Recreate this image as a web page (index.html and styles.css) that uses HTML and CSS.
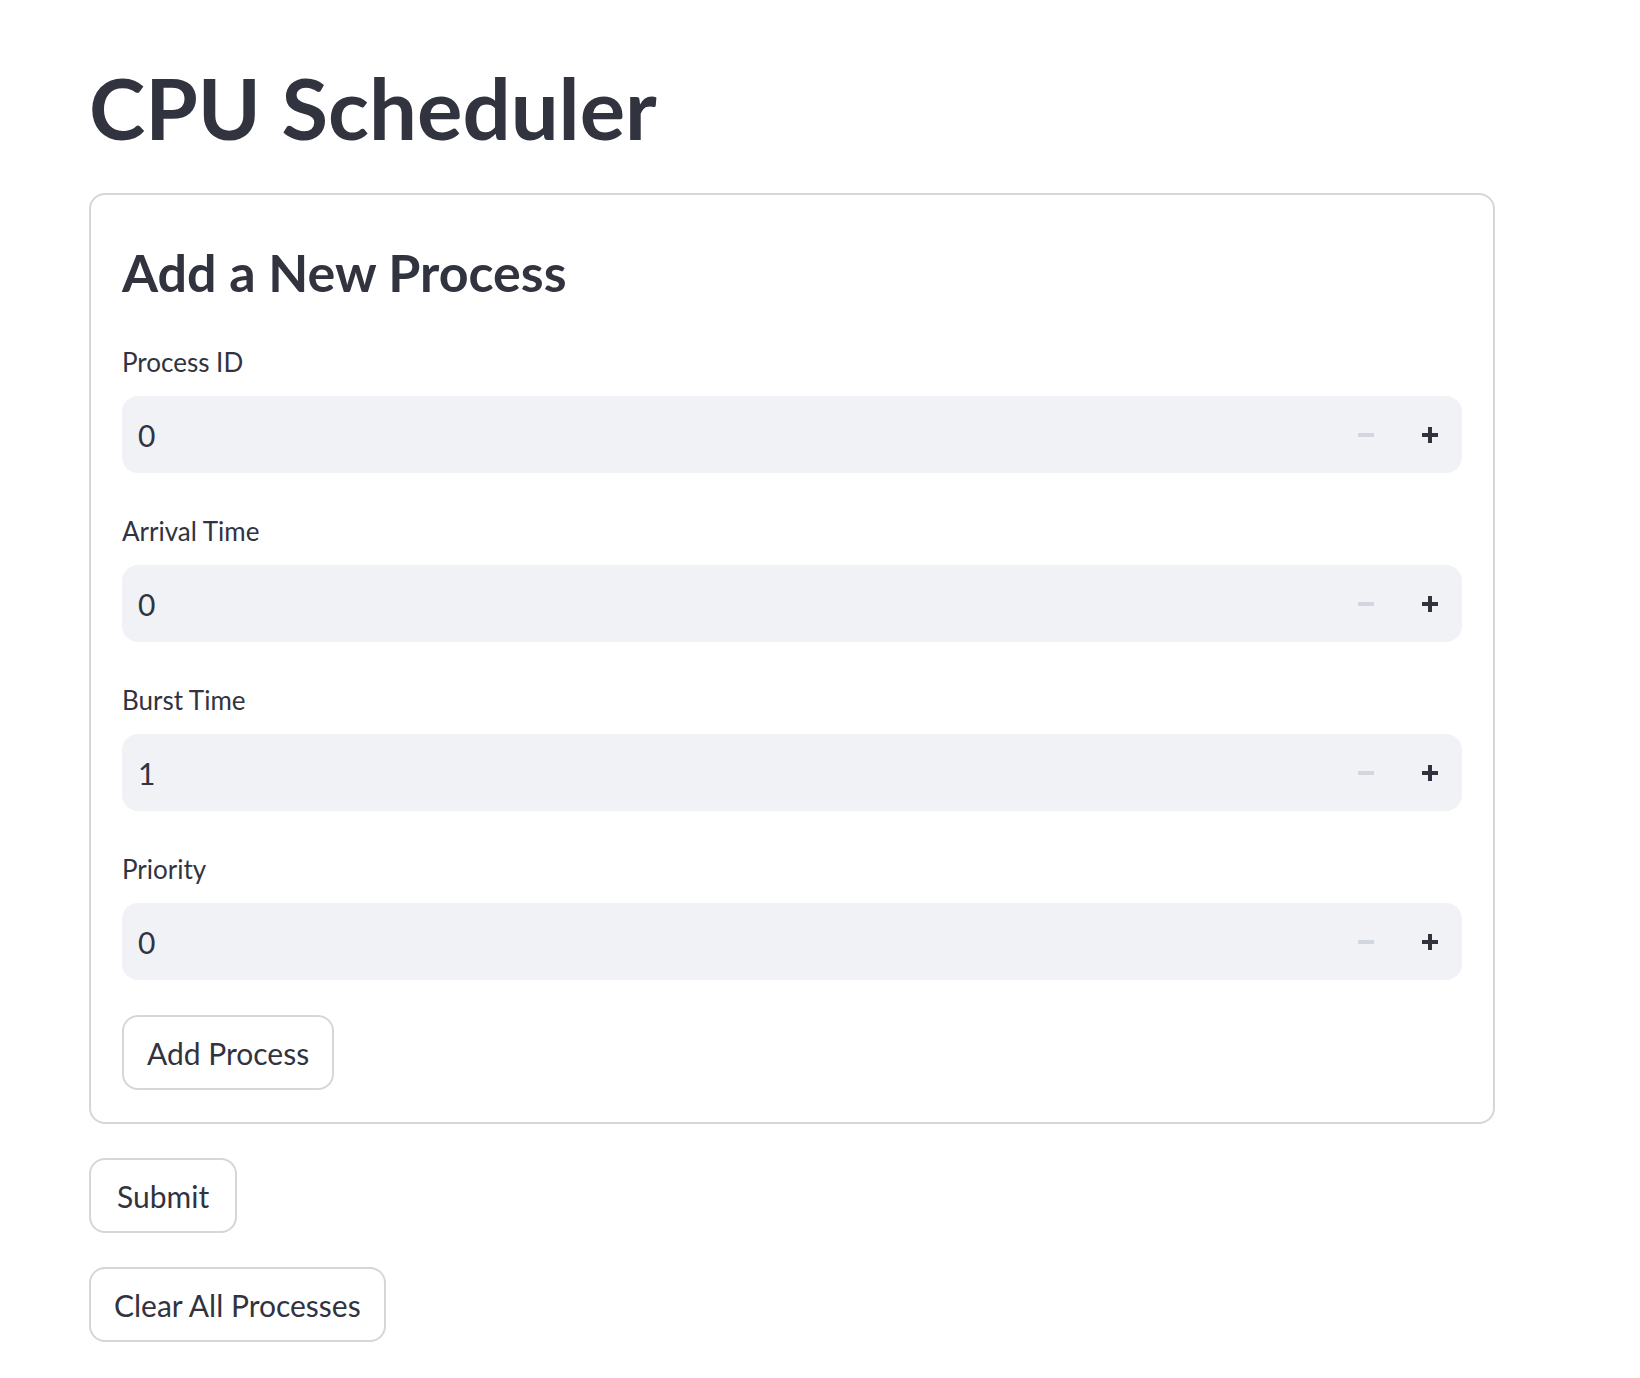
FILE: index.html
```html
<!DOCTYPE html>
<html lang="en">
<head>
<meta charset="utf-8">
<title>CPU Scheduler</title>
<link rel="stylesheet" href="styles.css">
</head>
<body>
<main class="page">
  <h1 class="title">CPU Scheduler</h1>
  <form class="form-box">
    <h3 class="form-title">Add a New Process</h3>

    <div class="field">
      <label class="field-label">Process ID</label>
      <div class="num-input">
        <span class="num-value">0</span>
        <div class="steps">
          <span class="step step-off"><svg width="16" height="16" viewBox="0 0 16 16"><rect x="0" y="6" width="16" height="4" fill="currentColor"/></svg></span>
          <span class="step"><svg width="16" height="16" viewBox="0 0 16 16"><rect x="0" y="6" width="16" height="4" fill="currentColor"/><rect x="6" y="0" width="4" height="16" fill="currentColor"/></svg></span>
        </div>
      </div>
    </div>

    <div class="field">
      <label class="field-label">Arrival Time</label>
      <div class="num-input">
        <span class="num-value">0</span>
        <div class="steps">
          <span class="step step-off"><svg width="16" height="16" viewBox="0 0 16 16"><rect x="0" y="6" width="16" height="4" fill="currentColor"/></svg></span>
          <span class="step"><svg width="16" height="16" viewBox="0 0 16 16"><rect x="0" y="6" width="16" height="4" fill="currentColor"/><rect x="6" y="0" width="4" height="16" fill="currentColor"/></svg></span>
        </div>
      </div>
    </div>

    <div class="field">
      <label class="field-label">Burst Time</label>
      <div class="num-input">
        <span class="num-value">1</span>
        <div class="steps">
          <span class="step step-off"><svg width="16" height="16" viewBox="0 0 16 16"><rect x="0" y="6" width="16" height="4" fill="currentColor"/></svg></span>
          <span class="step"><svg width="16" height="16" viewBox="0 0 16 16"><rect x="0" y="6" width="16" height="4" fill="currentColor"/><rect x="6" y="0" width="4" height="16" fill="currentColor"/></svg></span>
        </div>
      </div>
    </div>

    <div class="field">
      <label class="field-label">Priority</label>
      <div class="num-input">
        <span class="num-value">0</span>
        <div class="steps">
          <span class="step step-off"><svg width="16" height="16" viewBox="0 0 16 16"><rect x="0" y="6" width="16" height="4" fill="currentColor"/></svg></span>
          <span class="step"><svg width="16" height="16" viewBox="0 0 16 16"><rect x="0" y="6" width="16" height="4" fill="currentColor"/><rect x="6" y="0" width="4" height="16" fill="currentColor"/></svg></span>
        </div>
      </div>
    </div>

    <button type="button" class="btn btn-form">Add Process</button>
  </form>

  <div class="actions">
    <button type="button" class="btn btn-submit">Submit</button>
    <button type="button" class="btn">Clear All Processes</button>
  </div>
</main>
</body>
</html>
```

FILE: styles.css
```css
html, body {
  margin: 0;
  padding: 0;
  background: #ffffff;
}

body {
  font-family: "Source Sans Pro", Lato, "Noto Sans", sans-serif;
  color: #31333f;
}

.page {
  padding: 57px 0 39px 89px;
  width: 1406px;
}

.title {
  margin: 0;
  font-size: 85px;
  line-height: 100px;
  font-weight: 700;
  letter-spacing: 0;
}

.form-box {
  margin-top: 36px;
  box-sizing: border-box;
  width: 1406px;
  border: 2px solid #d6d6d9;
  border-radius: 16px;
  padding: 30px 31px 32px 31px;
  display: flex;
  flex-direction: column;
  align-items: flex-start;
}

.form-title {
  margin: 15px 0 0 0;
  font-size: 52px;
  line-height: 64px;
  font-weight: 700;
}

.field {
  margin-top: 38px;
  width: 100%;
  display: flex;
  flex-direction: column;
}

.field-label {
  font-size: 26px;
  line-height: 40px;
  height: 40px;
}

.num-input {
  margin-top: 14px;
  height: 77px;
  background: #f0f2f6;
  border-radius: 16px;
  display: flex;
  align-items: center;
}

.num-value {
  flex: 1;
  padding-left: 16px;
  font-size: 30px;
}

.steps {
  display: flex;
  height: 100%;
}

.step {
  width: 64px;
  height: 100%;
  display: flex;
  align-items: center;
  justify-content: center;
  color: #31333f;
}

.step-off {
  color: #d2d6de;
}

.btn {
  box-sizing: border-box;
  height: 75px;
  padding: 0 23px;
  border: 2px solid #d6d6d9;
  border-radius: 16px;
  background: #ffffff;
  color: #31333f;
  font-family: inherit;
  font-size: 30px;
  line-height: 1;
  display: inline-flex;
  align-items: center;
  justify-content: center;
}

.btn-submit {
  padding: 0 26px;
}

.btn-form {
  margin-top: 35px;
}

.actions {
  margin-top: 34px;
  display: flex;
  flex-direction: column;
  align-items: flex-start;
  gap: 34px;
}
```
